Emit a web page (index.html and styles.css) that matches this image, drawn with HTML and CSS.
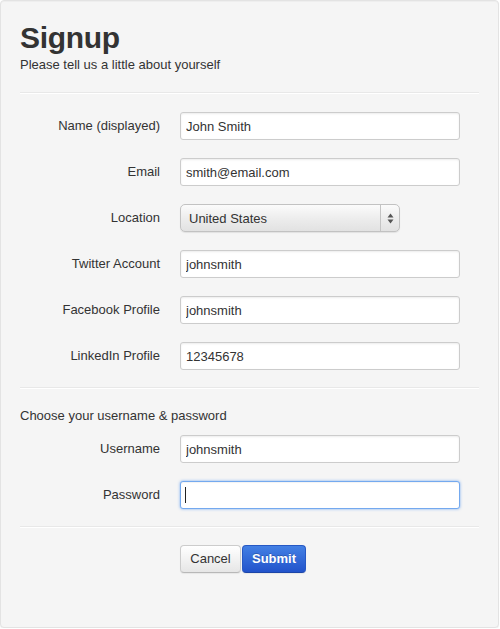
FILE: index.html
```html
<!DOCTYPE html>
<html>
<head>
<meta charset="utf-8">
<title>Signup</title>
<link rel="stylesheet" href="styles.css">
</head>
<body>
<form class="well">
  <h1 class="title">Signup</h1>
  <p class="subtitle">Please tell us a little about yourself</p>
  <hr class="divider">
  <div class="group">
    <div class="row"><label class="label">Name (displayed)</label><input class="field" type="text" value="John Smith"></div>
    <div class="row"><label class="label">Email</label><input class="field" type="text" value="smith@email.com"></div>
    <div class="row"><label class="label">Location</label>
      <div class="select-wrap">
        <select class="select"><option>United States</option></select>
        <div class="stepper">
          <svg width="7" height="11" viewBox="0 0 7 11"><path d="M3.5 0.5 L6.5 4.5 L0.5 4.5 Z" fill="#555"/><path d="M0.5 6.5 L6.5 6.5 L3.5 10.5 Z" fill="#555"/></svg>
        </div>
      </div>
    </div>
    <div class="row"><label class="label">Twitter Account</label><input class="field" type="text" value="johnsmith"></div>
    <div class="row"><label class="label">Facebook Profile</label><input class="field" type="text" value="johnsmith"></div>
    <div class="row"><label class="label">LinkedIn Profile</label><input class="field" type="text" value="12345678"></div>
  </div>
  <hr class="divider">
  <p class="legend">Choose your username &amp; password</p>
  <div class="group">
    <div class="row"><label class="label">Username</label><input class="field" type="text" value="johnsmith"></div>
    <div class="row"><label class="label">Password</label>
      <div class="focus-wrap"><input class="field focused" type="password" value=""><span class="caret"></span></div>
    </div>
  </div>
  <hr class="divider divider-last">
  <div class="actions">
    <button type="button" class="btn btn-cancel">Cancel</button>
    <button type="button" class="btn btn-primary">Submit</button>
  </div>
</form>
</body>
</html>
```
FILE: styles.css
```css
html, body {
  margin: 0;
  padding: 0;
  background: #fff;
}
body {
  font-family: "Liberation Sans", Arial, Helvetica, sans-serif;
  font-size: 13px;
  color: #333;
}
.well {
  box-sizing: border-box;
  width: 499px;
  height: 628px;
  margin: 0;
  padding: 19px 19px 0 19px;
  background: #f5f5f5;
  border: 1px solid #e3e3e3;
  border-radius: 4px;
  box-shadow: inset 0 1px 1px rgba(0,0,0,0.03), 0 1px 1px rgba(0,0,0,0.06);
}
.title {
  margin: 0;
  font-size: 30px;
  line-height: 36px;
  font-weight: bold;
  color: #333;
  letter-spacing: -0.3px;
}
.subtitle {
  margin: 0;
  line-height: 18px;
}
.divider {
  margin: 18px 0 18px 0;
  border: 0;
  border-top: 1px solid #e8e8e8;
  border-bottom: 1px solid #fff;
  height: 0;
}
.group {
  display: flex;
  flex-direction: column;
  gap: 18px;
}
.group + .divider {
  margin-top: 17px;
}
.divider-last {
  margin-bottom: 17px;
}
.row {
  display: flex;
  align-items: center;
}
.label {
  width: 140px;
  text-align: right;
  margin-right: 20px;
  line-height: 18px;
}
.field {
  box-sizing: border-box;
  width: 280px;
  height: 28px;
  padding: 0 5px;
  margin: 0;
  font-family: inherit;
  font-size: 13px;
  color: #333;
  background: #fff;
  border: 1px solid #ccc;
  border-radius: 3px;
  box-shadow: inset 0 1px 2px rgba(0,0,0,0.08);
  outline: none;
}
.focus-wrap {
  position: relative;
  display: flex;
}
.focused {
  border-color: #74a9ef;
  box-shadow: 0 0 3px rgba(82,148,240,0.75), inset 0 1px 1px rgba(0,0,0,0.05);
}
.caret {
  position: absolute;
  left: 5px;
  top: 6px;
  width: 1px;
  height: 16px;
  background: #222;
}
.select-wrap {
  position: relative;
  width: 220px;
  height: 28px;
}
.select {
  -webkit-appearance: none;
  appearance: none;
  box-sizing: border-box;
  width: 220px;
  height: 28px;
  margin: 0;
  padding: 0 0 0 8px;
  font-family: inherit;
  font-size: 13px;
  color: #333;
  border: 1px solid #c2c2c2;
  border-radius: 5px;
  background: linear-gradient(#fbfbfb, #ececec 55%, #e2e2e2);
  box-shadow: 0 1px 1px rgba(0,0,0,0.08);
  outline: none;
}
.stepper {
  position: absolute;
  right: 1px;
  top: 1px;
  bottom: 1px;
  width: 18px;
  border-left: 1px solid #c4c4c4;
  display: flex;
  align-items: center;
  justify-content: center;
}
.legend {
  margin: 0 0 10px 0;
  line-height: 18px;
}
.actions {
  display: flex;
  padding-left: 160px;
  gap: 1px;
}
.btn {
  box-sizing: border-box;
  height: 28px;
  padding: 0;
  font-family: inherit;
  font-size: 13px;
  line-height: 24px;
  color: #333;
  background: linear-gradient(#ffffff, #e6e6e6);
  border: 1px solid #ccc;
  border-bottom-color: #b8b8b8;
  border-radius: 4px;
  box-shadow: 0 1px 1px rgba(0,0,0,0.06);
  cursor: pointer;
}
.btn-cancel {
  width: 61px;
}
.btn-primary {
  width: 64px;
  color: #fff;
  font-weight: bold;
  background: linear-gradient(#4380e4, #2253cb);
  border-color: #2658c4 #2658c4 #1c45a8;
  text-shadow: 0 -1px 0 rgba(0,0,0,0.2);
}
```
